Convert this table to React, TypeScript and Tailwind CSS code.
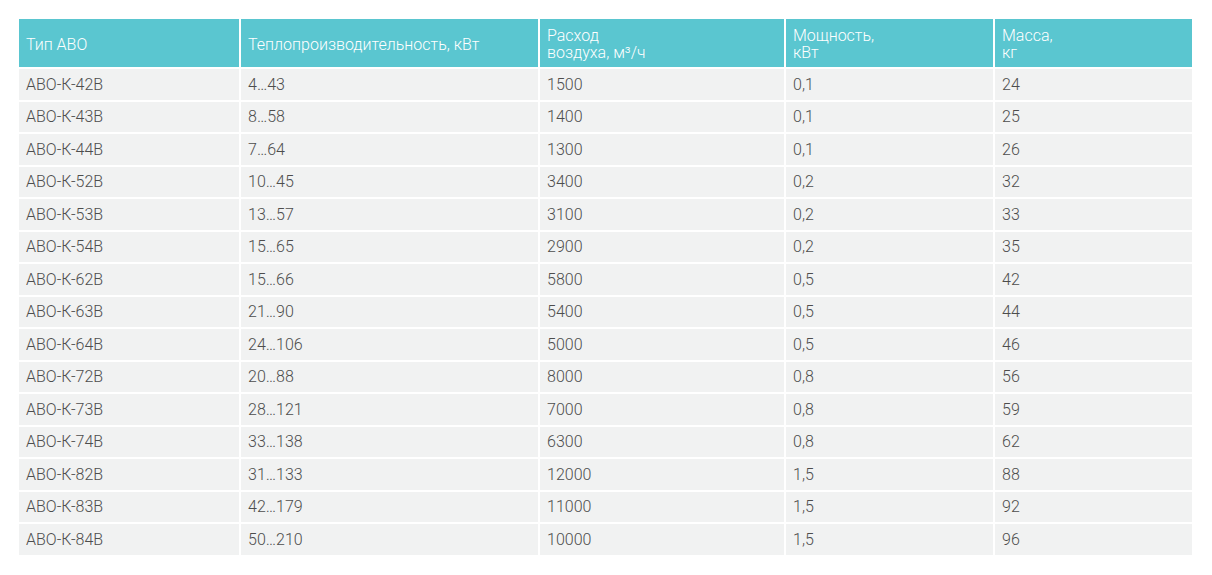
import React from "react";

const rows: [string, string, string, string, string][] = [
  ["АВО-К-42В", "4…43", "1500", "0,1", "24"],
  ["АВО-К-43В", "8…58", "1400", "0,1", "25"],
  ["АВО-К-44В", "7…64", "1300", "0,1", "26"],
  ["АВО-К-52В", "10…45", "3400", "0,2", "32"],
  ["АВО-К-53В", "13…57", "3100", "0,2", "33"],
  ["АВО-К-54В", "15…65", "2900", "0,2", "35"],
  ["АВО-К-62В", "15…66", "5800", "0,5", "42"],
  ["АВО-К-63В", "21…90", "5400", "0,5", "44"],
  ["АВО-К-64В", "24…106", "5000", "0,5", "46"],
  ["АВО-К-72В", "20…88", "8000", "0,8", "56"],
  ["АВО-К-73В", "28…121", "7000", "0,8", "59"],
  ["АВО-К-74В", "33…138", "6300", "0,8", "62"],
  ["АВО-К-82В", "31…133", "12000", "1,5", "88"],
  ["АВО-К-83В", "42…179", "11000", "1,5", "92"],
  ["АВО-К-84В", "50…210", "10000", "1,5", "96"],
];

const App = () => {
  const th =
    "bg-[#5ac6d0] text-white font-light text-left align-middle pl-[7px] pr-2 pt-[8px] pb-[6px] leading-[17px]";
  const td = "bg-[#f1f2f2] text-[#4d4d4d] font-light h-[30.5px] pl-[7px] pr-2 pt-[1px] pb-0 align-middle";

  return (
    <div className="min-h-screen bg-white p-[17px] font-['Roboto',sans-serif] text-[16px]">
      <table className="border-separate border-spacing-[2px] w-[1177px] table-fixed">
        <colgroup>
          <col className="w-[220px]" />
          <col className="w-[297px]" />
          <col className="w-[244px]" />
          <col className="w-[207px]" />
          <col className="w-[197px]" />
        </colgroup>
        <thead>
          <tr className="h-[48px]">
            <th className={th}>Тип АВО</th>
            <th className={th}>Теплопроизводительность, кВт</th>
            <th className={th}>
              Расход
              <br />
              воздуха, м³/ч
            </th>
            <th className={th}>
              Мощность,
              <br />
              кВт
            </th>
            <th className={th}>
              Масса,
              <br />
              кг
            </th>
          </tr>
        </thead>
        <tbody>
          {rows.map((r) => (
            <tr key={r[0]}>
              {r.map((c, i) => (
                <td key={i} className={td}>
                  {c}
                </td>
              ))}
            </tr>
          ))}
        </tbody>
      </table>
    </div>
  );
};

export default App;
